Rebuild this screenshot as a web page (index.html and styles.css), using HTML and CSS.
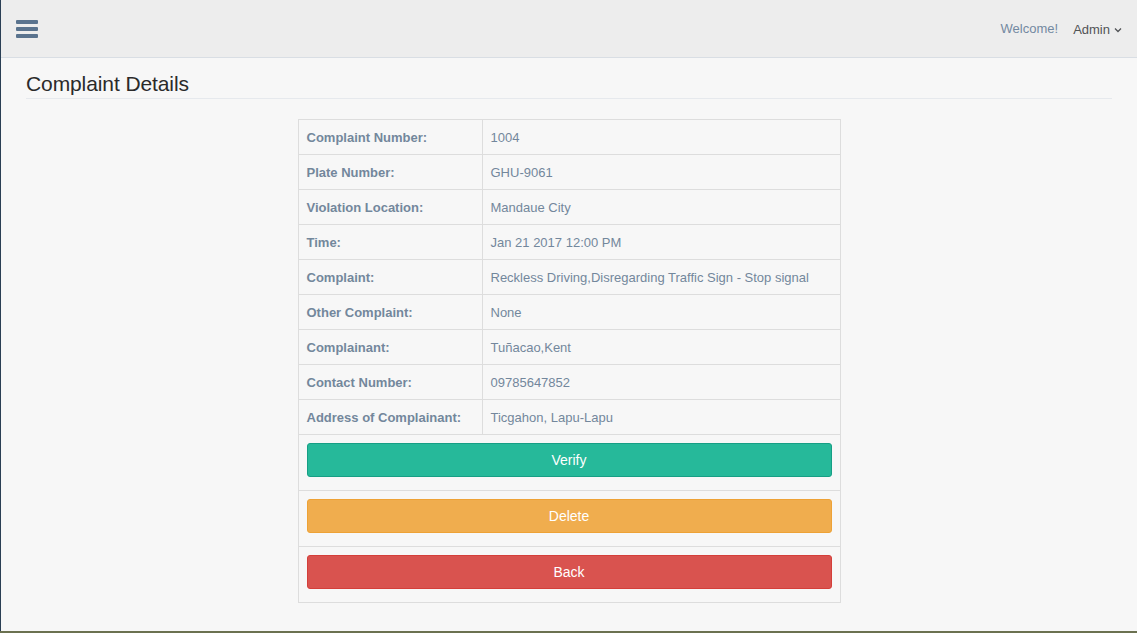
FILE: index.html
```html
<!DOCTYPE html>
<html>
<head>
<meta charset="utf-8">
<link rel="stylesheet" href="styles.css">
</head>
<body>
<div class="app">
  <header class="topnav">
    <div class="burger"><span></span><span></span><span></span></div>
    <div class="user">
      <span class="welcome">Welcome!</span>
      <span class="admin">Admin
        <svg class="chev" width="8" height="6" viewBox="0 0 8 6"><path d="M1 1.5 L4 4.5 L7 1.5" fill="none" stroke="#515356" stroke-width="1.3"/></svg>
      </span>
    </div>
  </header>
  <main class="content">
    <h2 class="title">Complaint Details</h2>
    <table class="details">
      <tr><th>Complaint Number:</th><td>1004</td></tr>
      <tr><th>Plate Number:</th><td>GHU-9061</td></tr>
      <tr><th>Violation Location:</th><td>Mandaue City</td></tr>
      <tr><th>Time:</th><td>Jan 21 2017 12:00 PM</td></tr>
      <tr><th>Complaint:</th><td>Reckless Driving,Disregarding Traffic Sign - Stop signal</td></tr>
      <tr><th>Other Complaint:</th><td>None</td></tr>
      <tr><th>Complainant:</th><td>Tuñacao,Kent</td></tr>
      <tr><th>Contact Number:</th><td>09785647852</td></tr>
      <tr><th>Address of Complainant:</th><td>Ticgahon, Lapu-Lapu</td></tr>
      <tr><td colspan="2" class="btncell"><button class="btn verify">Verify</button></td></tr>
      <tr><td colspan="2" class="btncell"><button class="btn delete">Delete</button></td></tr>
      <tr><td colspan="2" class="btncell"><button class="btn back">Back</button></td></tr>
    </table>
  </main>
</div>
<div class="ground"></div>
</body>
</html>
```
FILE: styles.css
```css
html, body {
  margin: 0;
  padding: 0;
  height: 633px;
  overflow: hidden;
}
body {
  font-family: "Liberation Sans", Arial, sans-serif;
  font-size: 13px;
  color: #73879C;
  background: #5f6a48;
}
.app {
  height: 631px;
  box-sizing: border-box;
  border-left: 1px solid #2A3F54;
  background: #F7F7F7;
}
.topnav {
  height: 58px;
  box-sizing: border-box;
  background: #EDEDED;
  border-bottom: 1px solid #D9DEE4;
  display: flex;
  align-items: center;
  justify-content: space-between;
  padding: 0 15px 0 15px;
}
.burger {
  width: 22px;
  display: flex;
  flex-direction: column;
  gap: 3px;
}
.burger span {
  display: block;
  height: 4px;
  background: #5A738E;
  border-radius: 1px;
}
.user {
  display: flex;
  align-items: center;
  gap: 15px;
}
.welcome {
  color: #7389A1;
  font-size: 13px;
}
.admin {
  color: #515356;
  font-size: 13px;
  display: flex;
  align-items: center;
  gap: 4px;
  margin-top: 2px;
}
.chev { display: block; margin-top: 1px; }
.content {
  padding: 0 25px 0 25px;
}
.title {
  margin: 12px 0 0 0;
  padding: 0 0 1px 0;
  font-size: 21px;
  font-weight: normal;
  color: #2A2A2A;
  line-height: 27px;
  border-bottom: 1px solid #E6E9ED;
  letter-spacing: -0.1px;
}
.details {
  margin: 20px auto 0 auto;
  width: 543px;
  border-collapse: collapse;
  background: #F7F7F7;
}
.details th, .details td {
  border: 1px solid #DDDDDD;
  padding: 9px 8px 7px 8px;
  line-height: 18px;
  text-align: left;
  vertical-align: top;
}
.details th {
  width: 167px;
  font-weight: bold;
  color: #73879C;
}
.details td {
  color: #73879C;
}
.details td.btncell {
  padding: 8px 8px 13px 8px;
}
.btn {
  display: block;
  width: 100%;
  height: 34px;
  box-sizing: border-box;
  border-radius: 3px;
  border: 1px solid;
  color: #fff;
  font-family: "Liberation Sans", Arial, sans-serif;
  font-size: 14px;
  padding: 0;
  cursor: pointer;
}
.verify { background: #26B99A; border-color: #169F85; }
.delete { background: #F0AD4E; border-color: #EEA236; }
.back { background: #D9534F; border-color: #D43F3A; }
.ground {
  height: 2px;
  background: #6b7150;
}
```
